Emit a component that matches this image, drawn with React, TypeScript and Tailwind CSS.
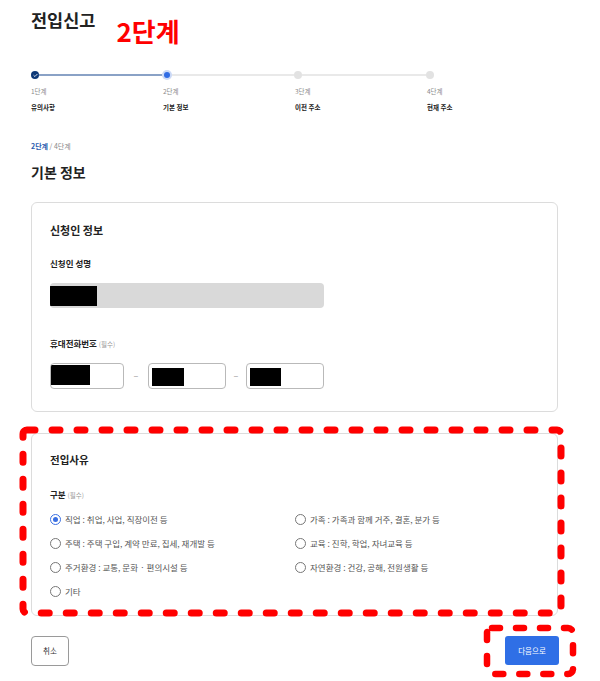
import { Check } from "lucide-react";

const steps = [
  { no: "1단계", label: "유의사항" },
  { no: "2단계", label: "기본 정보" },
  { no: "3단계", label: "이전 주소" },
  { no: "4단계", label: "현재 주소" },
];

const reasons = [
  { text: "직업 : 취업, 사업, 직장이전 등", checked: true },
  { text: "가족 : 가족과 함께 거주, 결혼, 분가 등" },
  { text: "주택 : 주택 구입, 계약 만료, 집세, 재개발 등" },
  { text: "교육 : 진학, 학업, 자녀교육 등" },
  { text: "주거환경 : 교통, 문화 · 편의시설 등" },
  { text: "자연환경 : 건강, 공해, 전원생활 등" },
  { text: "기타" },
];

function Radio({ checked }: { checked?: boolean }) {
  if (checked) {
    return (
      <span className="flex h-[11px] w-[11px] shrink-0 items-center justify-center rounded-full border border-[#3a6fe2]">
        <span className="h-[5px] w-[5px] rounded-full bg-[#3a6fe2]" />
      </span>
    );
  }
  return <span className="h-[11px] w-[11px] shrink-0 rounded-full border border-[#777]" />;
}

function Stepper() {
  return (
    <div>
      <div className="mt-[25px] flex h-[10px] items-center">
        <span className="flex h-[8px] w-[8px] shrink-0 items-center justify-center rounded-full bg-[#0d3877]">
          <Check className="h-[5px] w-[5px] text-white" strokeWidth={4} />
        </span>
        <span className="h-[2px] w-[123px] bg-[#8aa2c6]" />
        <span className="flex h-[10px] w-[10px] shrink-0 items-center justify-center rounded-full bg-[#cbd9f6]">
          <span className="h-[6px] w-[6px] rounded-full bg-[#2f6be4]" />
        </span>
        <span className="h-[2px] w-[122px] bg-[#e9e9e9]" />
        <span className="h-[8px] w-[8px] shrink-0 rounded-full bg-[#e2e2e2]" />
        <span className="h-[2px] w-[124px] bg-[#e9e9e9]" />
        <span className="h-[8px] w-[8px] shrink-0 rounded-full bg-[#e2e2e2]" />
      </div>
      <div className="grid grid-cols-[132px_132px_132px_132px]">
        {steps.map((s) => (
          <div key={s.no}>
            <p className="mt-[6px] text-[6.5px] leading-[10px] text-[#8a8a8a]">{s.no}</p>
            <p className="mt-[6px] text-[6.5px] font-bold leading-[10px] text-[#222]">{s.label}</p>
          </div>
        ))}
      </div>
    </div>
  );
}

function Redacted({ w, h = "h-[20px]" }: { w: string; h?: string }) {
  return <span className={`${w} ${h} block bg-black`} />;
}

export default function App() {
  return (
    <div
      className="relative h-[681px] w-[600px] overflow-hidden bg-white text-[#222]"
      style={{ fontFamily: '"Noto Sans CJK KR", "Noto Sans", sans-serif' }}
    >
      <div className="w-[558px] pl-[31px]">
        <div className="flex items-start">
          <h1 className="mt-[10px] text-[17.5px] font-bold leading-[20px] text-[#222]">전입신고</h1>
          <span className="ml-[21px] mt-[17px] text-[26px] font-bold leading-[28px] text-[#ff0000]">
            2단계
          </span>
        </div>

        <Stepper />

        <p className="mt-[29px] text-[7px] leading-[10px] text-[#888]">
          <span className="font-bold text-[#2a5cae]">2단계</span> / 4단계
        </p>
        <h2 className="mt-[11px] text-[14px] font-bold leading-[20px]">기본 정보</h2>

        <section className="mt-[20px] rounded-[6px] border border-[#dcdcdc] px-[18px] pb-[22px] pt-[20px]">
          <h3 className="text-[11px] font-bold leading-[14px]">신청인 정보</h3>
          <p className="mt-[20px] text-[8.5px] font-bold leading-[12px]">신청인 성명</p>
          <div className="mt-[14px] flex h-[25px] w-[274px] items-center overflow-hidden rounded-[4px] bg-[#d9d9d9]">
            <Redacted w="w-[47px]" />
          </div>
          <p className="mt-[29px] text-[8.5px] font-bold leading-[12px]">
            휴대전화번호 <span className="text-[6.5px] font-normal text-[#999]">(필수)</span>
          </p>
          <div className="mt-[13px] flex items-center">
            <div className="h-[26px] w-[74px] overflow-hidden rounded-[4px] border border-[#b9b9b9] pt-[1px]">
              <Redacted w="w-[39px]" />
            </div>
            <span className="w-[24px] text-center text-[9px] text-[#999]">–</span>
            <div className="flex h-[26px] w-[78px] rounded-[4px] border border-[#b9b9b9] pl-[3px] pt-[4px]">
              <Redacted w="w-[32px]" h="h-[18px]" />
            </div>
            <span className="w-[20px] text-center text-[9px] text-[#999]">–</span>
            <div className="flex h-[26px] w-[78px] rounded-[4px] border border-[#b9b9b9] pl-[3px] pt-[4px]">
              <Redacted w="w-[31px]" h="h-[18px]" />
            </div>
          </div>
        </section>

        <section className="mt-[21px] rounded-[6px] border border-[#dcdcdc] px-[18px] pb-[18px] pt-[19px]">
          <h3 className="text-[10.5px] font-bold leading-[14px]">전입사유</h3>
          <p className="mt-[21px] text-[8.5px] font-bold leading-[12px]">
            구분 <span className="text-[6.5px] font-normal text-[#999]">(필수)</span>
          </p>
          <div className="mt-[12px] grid grid-cols-[245px_1fr] gap-y-[12px]">
            {reasons.map((r) => (
              <label key={r.text} className="flex h-[12px] items-center gap-[4px]">
                <Radio checked={r.checked} />
                <span className="text-[8.5px] leading-[12px] text-[#555]">{r.text}</span>
              </label>
            ))}
          </div>
        </section>

        <div className="mt-[20px] flex items-start justify-between">
          <button
            type="button"
            className="h-[30px] w-[38px] rounded-[4px] border-[1.5px] border-[#9a9a9a] bg-white text-[7.5px] text-[#333]"
          >
            취소
          </button>
          <button
            type="button"
            className="-mr-[1px] h-[29px] w-[54px] rounded-[3px] bg-[#2f6fe6] text-[7.5px] text-white"
          >
            다음으로
          </button>
        </div>
      </div>

      {/* red annotation marks drawn over the screenshot */}
      <svg className="pointer-events-none absolute left-0 top-0" width="600" height="681">
        <rect
          x="23"
          y="430"
          width="538"
          height="183"
          rx="4"
          fill="none"
          stroke="#ff0000"
          strokeWidth="7"
          strokeDasharray="8 17"
          strokeLinecap="round"
        />
        <rect
          x="487"
          y="628"
          width="86"
          height="46"
          rx="5"
          fill="none"
          stroke="#ff0000"
          strokeWidth="6.5"
          strokeDasharray="8 16"
          strokeLinecap="round"
        />
      </svg>
    </div>
  );
}
